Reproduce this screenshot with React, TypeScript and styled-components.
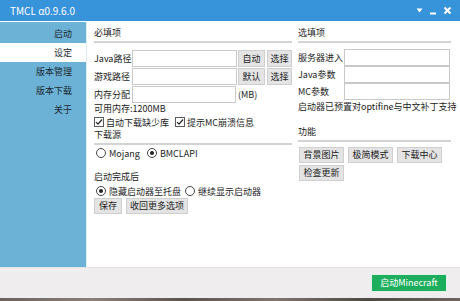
import styled, { createGlobalStyle } from 'styled-components'

const GlobalStyle = createGlobalStyle`
    html, body {
        margin: 0;
        padding: 0;
        overflow: hidden;
    }
    body {
        font-family: "Noto Sans CJK SC", "Noto Sans", sans-serif;
        color: #1c1c1c;
    }
`

const FONT = `"Noto Sans CJK SC", "Noto Sans", sans-serif`

const Window = styled.div`
    width: 460px;
    height: 301px;
    display: flex;
    flex-direction: column;
    background: #ffffff;
`

const TitleBar = styled.div`
    height: 21px;
    margin-bottom: 1px;
    flex-shrink: 0;
    background: #3793da;
    display: flex;
    align-items: center;
    justify-content: space-between;
    padding: 0 8px 0 10px;
    box-sizing: border-box;
`

const TitleText = styled.span`
    color: #ffffff;
    font-family: ${FONT};
    font-size: 10px;
    line-height: 14px;
`

const Controls = styled.div`
    display: flex;
    align-items: center;
    gap: 6px;
    svg { display: block; }
`

const Body = styled.div`
    display: flex;
    height: 245px;
    flex-shrink: 0;
`

const Sidebar = styled.nav`
    width: 87px;
    flex-shrink: 0;
    background: #6cb2d6;
    border-right: 1px solid #dfeef6;
    padding-top: 2px;
    box-sizing: border-box;
`

const NavItem = styled.div<{ $active?: boolean }>`
    height: 19px;
    line-height: 19px;
    text-align: right;
    padding-right: 14px;
    font-size: 9px;
    color: #1d2a33;
    background: ${p => (p.$active ? '#ffffff' : 'transparent')};
`

const Main = styled.main`
    flex: 1;
    display: flex;
    gap: 6px;
    padding: 0 8px 0 7px;
`

const Column = styled.section<{ $width: number }>`
    width: ${p => p.$width}px;
    flex-shrink: 0;
    display: flex;
    flex-direction: column;
    font-size: 9px;
`

const SectionTitle = styled.div<{ $top: number }>`
    margin-top: ${p => p.$top}px;
    line-height: 12px;
    padding-bottom: 2px;
    border-bottom: 2px solid #d3d3d3;
    font-size: 9px;
`

const FieldList = styled.div<{ $top: number; $gap: number }>`
    display: flex;
    flex-direction: column;
    gap: ${p => p.$gap}px;
    margin-top: ${p => p.$top}px;
`

const FieldRow = styled.div`
    display: flex;
    align-items: center;
    height: 17px;
`

const FieldLabel = styled.span<{ $width: number }>`
    width: ${p => p.$width}px;
    flex-shrink: 0;
    white-space: nowrap;
    font-size: 9px;
`

const TextBox = styled.input<{ $width: number }>`
    width: ${p => p.$width}px;
    height: 17px;
    box-sizing: border-box;
    border: 1px solid #c9c9c9;
    background: #ffffff;
    margin: 0;
    padding: 0 2px;
    font-size: 9px;
    outline: none;
`

const Btn = styled.button<{ $width: number; $height?: number }>`
    width: ${p => p.$width}px;
    height: ${p => p.$height ?? 17}px;
    padding: 0;
    box-sizing: border-box;
    margin: 0;
    border: 1px solid #cfcfcf;
    background: #e4e4e4;
    font-family: ${FONT};
    font-size: 9px;
    color: #1c1c1c;
    line-height: ${p => (p.$height ?? 17) - 2}px;
    white-space: nowrap;
    flex-shrink: 0;
`

const ButtonGroup = styled.div<{ $gap: number; $left?: number }>`
    display: flex;
    gap: ${p => p.$gap}px;
    margin-left: ${p => p.$left ?? 0}px;
`

const Unit = styled.span`
    margin-left: 2px;
    font-size: 9px;
`

const Line = styled.div<{ $height: number; $top?: number }>`
    line-height: ${p => p.$height}px;
    margin-top: ${p => p.$top ?? 0}px;
    white-space: nowrap;
    font-size: 9px;
`

const OptionRow = styled.div<{ $top?: number; $left?: number; $gap: number }>`
    display: flex;
    align-items: center;
    height: 14px;
    margin-top: ${p => p.$top ?? 0}px;
    margin-left: ${p => p.$left ?? 0}px;
    gap: ${p => p.$gap}px;
`

const Option = styled.label`
    display: flex;
    align-items: center;
    gap: 2px;
    font-size: 9px;
    white-space: nowrap;
`

const CheckBox = styled.span`
    width: 10px;
    height: 10px;
    box-sizing: border-box;
    border: 1px solid #5a5a5a;
    background: #fff;
    display: flex;
    align-items: center;
    justify-content: center;
`

const RadioDot = styled.span<{ $on?: boolean }>`
    width: 10px;
    height: 10px;
    box-sizing: border-box;
    border: 1px solid #444;
    border-radius: 50%;
    background: #fff;
    display: flex;
    align-items: center;
    justify-content: center;
    margin-right: 1px;

    &::after {
        content: '';
        width: 4px;
        height: 4px;
        border-radius: 50%;
        background: ${p => (p.$on ? '#222' : 'transparent')};
    }
`

const ToolGrid = styled.div`
    display: flex;
    flex-wrap: wrap;
    gap: 2px 4px;
    margin-top: 5px;
    padding-left: 1px;
`

const Footer = styled.footer`
    height: 31px;
    flex-shrink: 0;
    background: #efedee;
    border-top: 1px solid #e3e3e3;
    box-sizing: border-box;
    display: flex;
    align-items: center;
    justify-content: flex-end;
    padding-right: 13px;
`

const LaunchButton = styled.button`
    width: 76px;
    height: 18px;
    margin: 0;
    padding: 0;
    box-sizing: border-box;
    border: 1px solid #dff2e6;
    background: #1dae5d;
    color: #ffffff;
    font-family: ${FONT};
    font-size: 9px;
    line-height: 16px;
`

const DesktopStrip = styled.div`
    height: 3px;
    flex-shrink: 0;
    background: linear-gradient(90deg, #6a625b 0%, #8c8178 20%, #5b544e 40%, #7f766c 60%, #4e4945 80%, #6d655d 100%);
`

const Check = () => (
    <CheckBox>
        <svg width="8" height="8" viewBox="0 0 8 8">
            <path d="M1 4.2 L3 6.2 L7 1.5" fill="none" stroke="#222" strokeWidth="1.2" />
        </svg>
    </CheckBox>
)

const navItems = ['启动', '设定', '版本管理', '版本下载', '关于']
const tools = ['背景图片', '极简模式', '下载中心', '检查更新']

const App = () => {
    return (
        <>
            <GlobalStyle />
            <Window>
                <TitleBar>
                    <TitleText>TMCL α0.9.6.0</TitleText>
                    <Controls>
                        <svg width="7" height="5" viewBox="0 0 7 5">
                            <path d="M0.5 0.5 H6.5 L3.5 4.5 Z" fill="#ffffff" />
                        </svg>
                        <svg width="8" height="8" viewBox="0 0 8 8">
                            <rect x="1" y="5.5" width="6" height="2" fill="#ffffff" />
                        </svg>
                        <svg width="9" height="9" viewBox="0 0 9 9">
                            <path d="M1.5 1.5 L7.5 7.5 M7.5 1.5 L1.5 7.5" stroke="#ffffff" strokeWidth="2" />
                        </svg>
                    </Controls>
                </TitleBar>
                <Body>
                    <Sidebar>
                        {navItems.map(n => (
                            <NavItem key={n} $active={n === '设定'}>{n}</NavItem>
                        ))}
                    </Sidebar>
                    <Main>
                        <Column $width={198}>
                            <SectionTitle $top={5}>必填项</SectionTitle>
                            <FieldList $top={7} $gap={1}>
                                <FieldRow>
                                    <FieldLabel $width={38}>Java路径</FieldLabel>
                                    <TextBox $width={105} />
                                    <ButtonGroup $gap={2} $left={1}>
                                        <Btn $width={27}>自动</Btn>
                                        <Btn $width={25}>选择</Btn>
                                    </ButtonGroup>
                                </FieldRow>
                                <FieldRow>
                                    <FieldLabel $width={38}>游戏路径</FieldLabel>
                                    <TextBox $width={105} />
                                    <ButtonGroup $gap={2} $left={1}>
                                        <Btn $width={27}>默认</Btn>
                                        <Btn $width={25}>选择</Btn>
                                    </ButtonGroup>
                                </FieldRow>
                                <FieldRow>
                                    <FieldLabel $width={38}>内存分配</FieldLabel>
                                    <TextBox $width={104} />
                                    <Unit>(MB)</Unit>
                                </FieldRow>
                            </FieldList>
                            <Line $height={12}>可用内存:1200MB</Line>
                            <OptionRow $gap={6}>
                                <Option><Check />自动下载缺少库</Option>
                                <Option><Check />提示MC崩溃信息</Option>
                            </OptionRow>
                            <SectionTitle $top={0}>下载源</SectionTitle>
                            <OptionRow $top={1} $left={2} $gap={7}>
                                <Option><RadioDot />Mojang</Option>
                                <Option><RadioDot $on />BMCLAPI</Option>
                            </OptionRow>
                            <Line $height={12} $top={11}>启动完成后</Line>
                            <OptionRow $top={1} $left={2} $gap={4}>
                                <Option><RadioDot $on />隐藏启动器至托盘</Option>
                                <Option><RadioDot />继续显示启动器</Option>
                            </OptionRow>
                            <ButtonGroup $gap={4}>
                                <Btn $width={28} $height={16}>保存</Btn>
                                <Btn $width={62} $height={16}>收回更多选项</Btn>
                            </ButtonGroup>
                        </Column>
                        <Column $width={153}>
                            <SectionTitle $top={5}>选填项</SectionTitle>
                            <FieldList $top={6} $gap={0}>
                                <FieldRow>
                                    <FieldLabel $width={46}>服务器进入</FieldLabel>
                                    <TextBox $width={106} />
                                </FieldRow>
                                <FieldRow>
                                    <FieldLabel $width={46}>Java参数</FieldLabel>
                                    <TextBox $width={106} />
                                </FieldRow>
                                <FieldRow>
                                    <FieldLabel $width={46}>MC参数</FieldLabel>
                                    <TextBox $width={106} />
                                </FieldRow>
                            </FieldList>
                            <Line $height={12} $top={1}>启动器已预置对optifine与中文补丁支持</Line>
                            <SectionTitle $top={13}>功能</SectionTitle>
                            <ToolGrid>
                                {tools.map(t => (
                                    <Btn key={t} $width={45} $height={16}>{t}</Btn>
                                ))}
                            </ToolGrid>
                        </Column>
                    </Main>
                </Body>
                <Footer>
                    <LaunchButton>启动Minecraft</LaunchButton>
                </Footer>
                <DesktopStrip />
            </Window>
        </>
    )
}

export default App
